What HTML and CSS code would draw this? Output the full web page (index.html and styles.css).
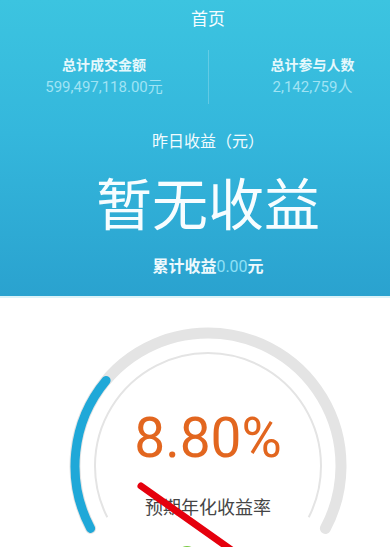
FILE: index.html
```html
<!DOCTYPE html>
<html lang="zh-CN">
<head>
<meta charset="utf-8">
<title>首页</title>
<link rel="stylesheet" href="styles.css">
</head>
<body>
<div class="frame">
<div class="page">
  <header class="hero">
    <div class="title">首页</div>
    <div class="stats">
      <div class="stat">
        <div class="stat-label">总计成交金额</div>
        <div class="stat-value">599,497,118.00元</div>
      </div>
      <div class="stat stat-right">
        <div class="stat-label">总计参与人数</div>
        <div class="stat-value">2,142,759人</div>
      </div>
    </div>
    <div class="y-label">昨日收益（元）</div>
    <div class="y-value">暂无收益</div>
    <div class="total">累计收益<span class="total-num">0.00</span>元</div>
  </header>
  <div class="sep"></div>
  <section class="gauge">
    <div class="rate">8.80%</div>
    <div class="rate-label">预期年化收益率</div>
    <svg class="gauge-svg" width="416" height="260" viewBox="0 0 416 260">
      <path d="M90.6 230.4 A133 133 0 1 1 325.4 230.4" fill="none" stroke="#e4e4e4" stroke-width="11" stroke-linecap="round"/>
      <path d="M107.3 219.3 A113 113 0 1 1 308.7 219.3" fill="none" stroke="#e4e4e4" stroke-width="2"/>
      <path d="M90.6 230.4 A133 133 0 0 1 106.1 82.5" fill="none" stroke="#1fa8d8" stroke-width="9" stroke-linecap="round"/>
      <circle cx="187" cy="258" r="10" fill="#7ac943"/>
      <line x1="141" y1="188" x2="240" y2="258" stroke="#e5000d" stroke-width="7" stroke-linecap="round"/>
    </svg>
  </section>
</div>
</div>
</body>
</html>
```
FILE: styles.css
```css
html, body {
  margin: 0;
  padding: 0;
  overflow: hidden;
  background: #ffffff;
}
.frame {
  width: 390px;
  height: 547px;
  overflow: hidden;
}
.page {
  width: 416px;
  font-family: "Noto Sans CJK SC", "Noto Sans", sans-serif;
}
.hero {
  height: 296px;
  background: linear-gradient(180deg, #3cc4e0 0%, #34b7dc 45%, #2aa2cf 100%);
  color: #ffffff;
  text-align: center;
  overflow: hidden;
}
.title {
  font-size: 17px;
  line-height: 36px;
  color: #f4fcff;
}
.stats {
  display: grid;
  grid-template-columns: 1fr 1fr;
  margin-top: 14px;
}
.stat {
  padding: 4px 0;
}
.stat-right {
  border-left: 1px solid rgba(255, 255, 255, 0.22);
}
.stat-label {
  font-size: 14px;
  line-height: 20px;
  font-weight: 700;
  color: #e6f8fc;
}
.stat-value {
  font-family: Roboto, "Noto Sans CJK SC", sans-serif;
  font-size: 15px;
  line-height: 26px;
  color: #9fe3f4;
}
.y-label {
  margin-top: 24px;
  font-size: 16px;
  line-height: 24px;
  color: #f2fbfe;
}
.y-value {
  margin-top: 14px;
  font-size: 56px;
  line-height: 70px;
  color: #f7fdff;
}
.total {
  margin-top: 17px;
  font-size: 16px;
  line-height: 24px;
  font-weight: 700;
  color: #eef9fd;
}
.total-num {
  font-family: Roboto, sans-serif;
  font-weight: 400;
  color: #8fe0f6;
}
.sep {
  height: 2px;
  background: #dcf3f9;
}
.gauge {
  position: relative;
  height: 260px;
  padding-top: 105px;
  box-sizing: border-box;
  text-align: center;
}
.rate {
  font-family: Roboto, sans-serif;
  font-size: 55px;
  line-height: 70px;
  color: #e2661f;
}
.rate-label {
  margin-top: 20px;
  font-size: 18px;
  line-height: 26px;
  color: #454545;
}
.gauge-svg {
  position: absolute;
  left: 0;
  top: 0;
}
```
